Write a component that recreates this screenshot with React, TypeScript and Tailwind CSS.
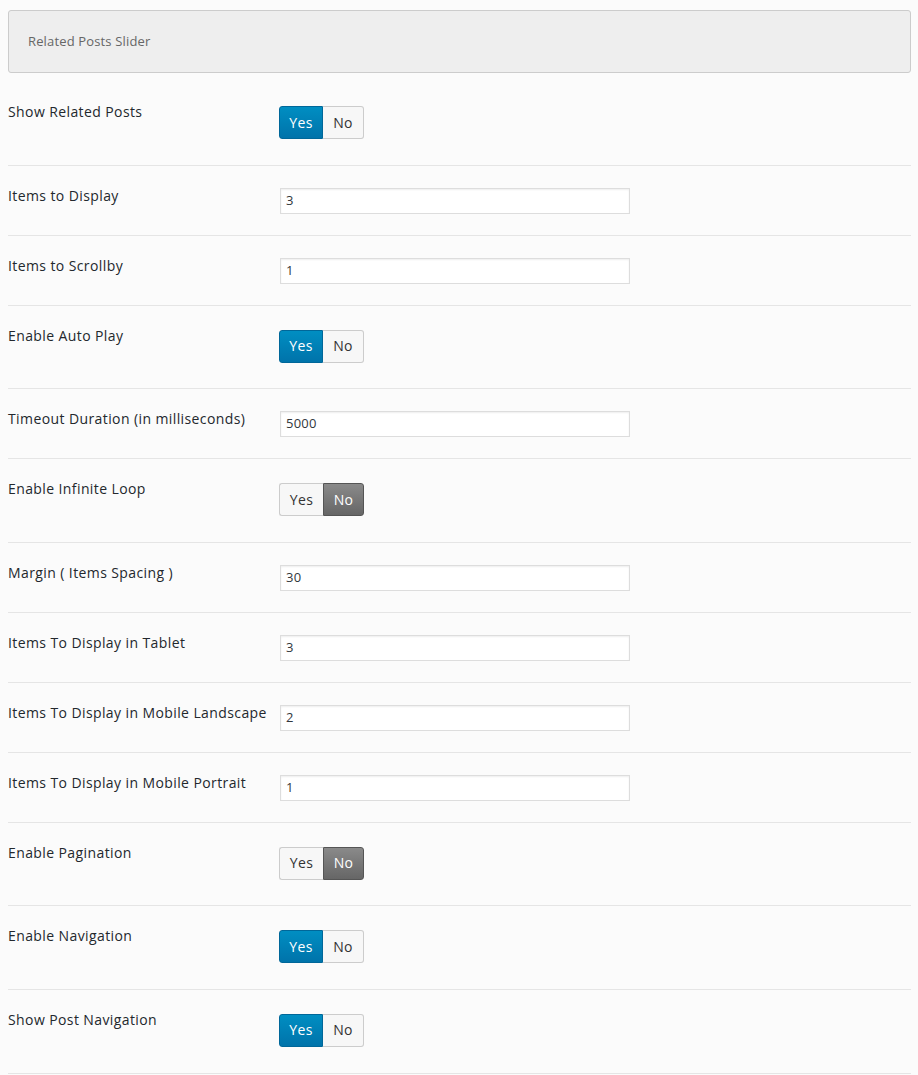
import React from "react";

type Field =
  | { kind: "toggle"; label: string; on: boolean }
  | { kind: "text"; label: string; value: string };

const FIELDS: Field[] = [
  { kind: "toggle", label: "Show Related Posts", on: true },
  { kind: "text", label: "Items to Display", value: "3" },
  { kind: "text", label: "Items to Scrollby", value: "1" },
  { kind: "toggle", label: "Enable Auto Play", on: true },
  { kind: "text", label: "Timeout Duration (in milliseconds)", value: "5000" },
  { kind: "toggle", label: "Enable Infinite Loop", on: false },
  { kind: "text", label: "Margin ( Items Spacing )", value: "30" },
  { kind: "text", label: "Items To Display in Tablet", value: "3" },
  { kind: "text", label: "Items To Display in Mobile Landscape", value: "2" },
  { kind: "text", label: "Items To Display in Mobile Portrait", value: "1" },
  { kind: "toggle", label: "Enable Pagination", on: false },
  { kind: "toggle", label: "Enable Navigation", on: true },
  { kind: "toggle", label: "Show Post Navigation", on: true },
];

function Switch({ on }: { on: boolean }) {
  return (
    <div className="mt-[24px] mb-[25.6px] flex h-[33px] text-[14px] leading-none tracking-[0.3px]">
      <span
        className={
          on
            ? "flex w-[44px] items-center justify-center rounded-l-[3px] border border-[#006799] bg-gradient-to-b from-[#008ec2] to-[#0073aa] text-white"
            : "flex w-[44px] items-center justify-center rounded-l-[3px] border border-r-0 border-[#cccccc] bg-[#f7f7f7] text-[#333]"
        }
      >
        Yes
      </span>
      <span
        className={
          on
            ? "flex w-[41px] items-center justify-center rounded-r-[3px] border border-l-0 border-[#cccccc] bg-[#f7f7f7] text-[#333]"
            : "flex w-[41px] items-center justify-center rounded-r-[3px] border border-[#555] bg-gradient-to-b from-[#8a8a8a] to-[#666] text-white"
        }
      >
        No
      </span>
    </div>
  );
}

function TextBox({ value }: { value: string }) {
  return (
    <div className="mt-[22px] mb-[21px] ml-px flex h-[26px] w-[350px] items-center border border-[#dddddd] bg-white px-[5px] text-[13px] tracking-[0.2px] text-[#32373c] shadow-[inset_0_1px_2px_rgba(0,0,0,0.07)]">
      {value}
    </div>
  );
}

export default function App() {
  return (
    <div
      className="min-h-[1075px] bg-[#fbfbfb] pt-[10px] text-[#333]"
      style={{ fontFamily: '"Open Sans", "Liberation Sans", sans-serif' }}
    >
      <div className="ml-[8px] w-[903px]">
        <div className="flex h-[63px] items-center rounded-[3px] border border-[#cccccc] bg-[#eeeeee] pl-[19px] text-[13px] tracking-[0.15px] text-[#666]">
          Related Posts Slider
        </div>

        <div className="mt-[9px]">
          {FIELDS.map((f) => (
            <div
              key={f.label}
              className="flex items-start border-b border-[#e5e5e5]"
            >
              <div className="w-[271px] pt-[20px] text-[14px] leading-[20px] tracking-[0.4px] text-[#23282d]">
                {f.label}
              </div>
              {f.kind === "toggle" ? (
                <Switch on={f.on} />
              ) : (
                <TextBox value={f.value} />
              )}
            </div>
          ))}
        </div>
      </div>
    </div>
  );
}
